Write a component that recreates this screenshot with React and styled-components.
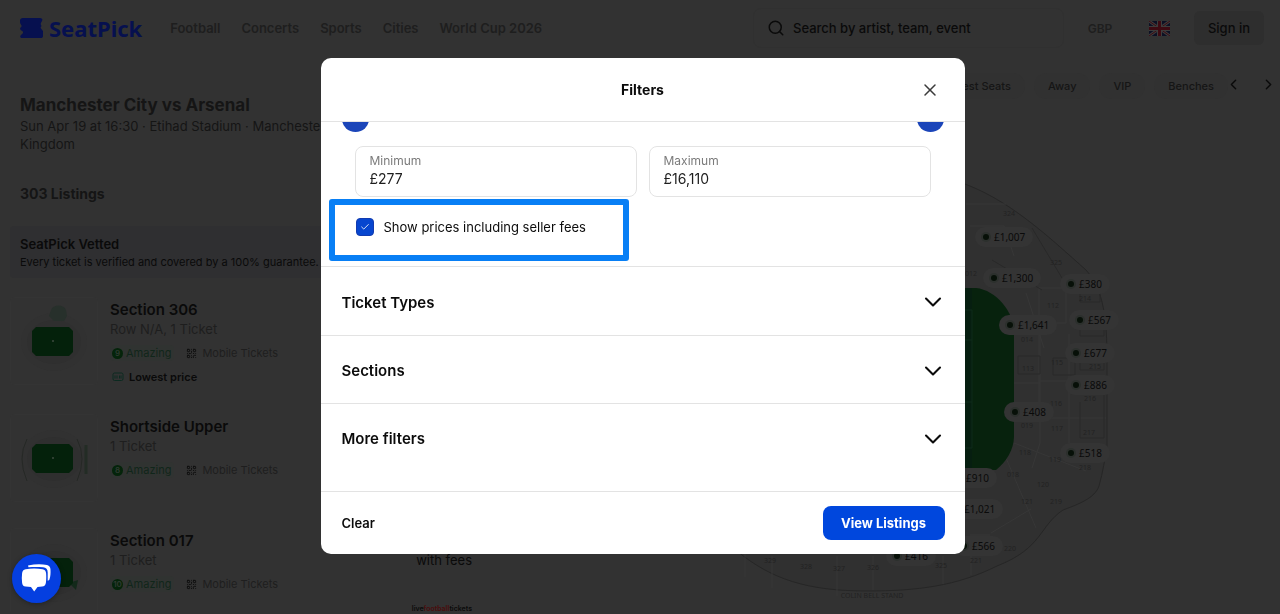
import React from 'react';
import styled, { createGlobalStyle, ThemeProvider } from 'styled-components';
import {
  Check,
  ChevronDown,
  ChevronLeft,
  ChevronRight,
  QrCode,
  Search,
  X,
} from 'lucide-react';

const theme = {
  colors: {
    page: '#323232',
    banner: '#2f2f31',
    raised: '#2e2e2e',
    line: '#2d2d2d',
    ink: '#0a0a0a',
    soft: '#151515',
    muted: '#1e1e1e',
    green: '#10261a',
    brand: '#06104f',
    primary: '#0047dd',
    highlight: '#087ff5',
    white: '#ffffff',
    text: '#0b0b0b',
    label: '#7b7b7b',
    border: '#e3e3e3',
  },
  fonts: {
    body: "Inter, 'Open Sans', sans-serif",
    logo: "'Noto Sans', 'Open Sans', sans-serif",
  },
};

const GlobalStyle = createGlobalStyle`
  *, *::before, *::after {
    box-sizing: border-box;
  }
  body {
    margin: 0;
    background: #323232;
    font-family: Inter, 'Open Sans', sans-serif;
    font-size: 13px;
  }
  h1, h2, h3, p, ul {
    margin: 0;
    padding: 0;
  }
  button, input {
    font: inherit;
    color: inherit;
    margin: 0;
  }
  button {
    border: 0;
    padding: 0;
    background: none;
    cursor: pointer;
  }
`;

const Page = styled.div`
  height: 100vh;
  overflow: hidden;
  display: flex;
  flex-direction: column;
  color: ${(props) => props.theme.colors.ink};
  background: ${(props) => props.theme.colors.page};
`;

const Header = styled.header`
  flex: none;
  height: 56px;
  display: flex;
  align-items: center;
  padding: 0 16px 0 20px;
`;

const Logo = styled.a`
  display: flex;
  align-items: center;
  gap: 6px;
  margin-right: 28px;
  color: ${(props) => props.theme.colors.brand};
  font-family: ${(props) => props.theme.fonts.logo};
  font-size: 22px;
  font-weight: 700;
  line-height: 24px;
  text-decoration: none;
`;

const Nav = styled.nav`
  display: flex;
  gap: 21px;
`;

const NavLink = styled.a`
  color: ${(props) => props.theme.colors.muted};
  font-weight: 600;
  line-height: 18px;
  text-decoration: none;
  white-space: nowrap;
`;

const SearchBox = styled.label`
  display: flex;
  align-items: center;
  gap: 8px;
  width: 311px;
  height: 40px;
  margin-left: auto;
  padding: 0 13px;
  border: 1px solid #303030;
  border-radius: 8px;
`;

const SearchInput = styled.input`
  flex: 1;
  min-width: 0;
  padding: 0;
  border: 0;
  outline: 0;
  background: none;
  font-weight: 500;

  &::placeholder {
    color: ${(props) => props.theme.colors.ink};
    opacity: 1;
  }
`;

const Currency = styled.button`
  width: 72px;
  color: ${(props) => props.theme.colors.muted};
  font-size: 12px;
  font-weight: 600;
`;

const Language = styled.button`
  display: flex;
  justify-content: center;
  width: 46px;
  margin-right: 12px;
`;

const SignIn = styled.button`
  width: 70px;
  height: 34px;
  border-radius: 6px;
  background: ${(props) => props.theme.colors.raised};
  font-weight: 500;
`;

const Main = styled.main`
  flex: 1;
  min-height: 0;
  display: grid;
  grid-template-columns: 486px minmax(0, 1fr);
`;

const Listings = styled.section`
  padding: 39px 8px 0 10px;
`;

const EventTitle = styled.h1`
  padding: 0 10px;
  color: ${(props) => props.theme.colors.soft};
  font-size: 17px;
  font-weight: 700;
  line-height: 20px;
`;

const EventMeta = styled.p`
  width: 400px;
  padding: 0 10px;
  margin-top: 2px;
  color: ${(props) => props.theme.colors.soft};
  line-height: 18px;
`;

const ListingCount = styled.h2`
  padding: 0 10px;
  margin-top: 31px;
  color: ${(props) => props.theme.colors.soft};
  font-size: 14px;
  font-weight: 700;
  line-height: 20px;
`;

const Banner = styled.div`
  margin: 22px 0 19px;
  padding: 9px 10px 6px;
  border-radius: 4px;
  background: ${(props) => props.theme.colors.banner};
`;

const BannerTitle = styled.h3`
  font-size: 13px;
  font-weight: 600;
  line-height: 18px;
`;

const BannerText = styled.p`
  font-size: 11px;
  line-height: 19px;
`;

const ListingList = styled.ul`
  display: grid;
  gap: 26px;
  list-style: none;
`;

const Listing = styled.li`
  display: flex;
  align-items: flex-start;
  gap: 12px;
`;

const Thumb = styled.svg`
  flex: none;
  width: 88px;
  height: 88px;
`;

const ListingBody = styled.div`
  flex: 1;
  padding: 2px 0;
`;

const ListingTitle = styled.h3`
  font-size: 15px;
  font-weight: 600;
  line-height: 22px;
`;

const ListingMeta = styled.p`
  color: ${(props) => props.theme.colors.muted};
  line-height: 17px;
`;

const TagRow = styled.div`
  display: flex;
  align-items: center;
  gap: 10px;
  height: 18px;
  margin-top: 6px;
`;

const Tag = styled.span`
  display: flex;
  align-items: center;
  gap: ${(props) => (props.$green ? '3px' : '5px')};
  padding: 0 3px 0 2px;
  border-radius: 4px;
  color: ${(props) =>
    props.$green ? props.theme.colors.green : props.theme.colors.muted};
  background: ${(props) => (props.$green ? '#303331' : 'none')};
  font-size: 11px;
  line-height: 16px;
`;

const Score = styled.span`
  display: grid;
  place-items: center;
  width: 11px;
  height: 11px;
  border-radius: 50%;
  color: #2f3a31;
  background: #04240a;
  font-size: 8px;
  font-weight: 600;
  line-height: 11px;
`;

const LowestPrice = styled(TagRow)`
  gap: 5px;
  padding-left: 2px;
  font-size: 11px;
  font-weight: 600;
`;

const PriceColumn = styled.div`
  display: flex;
  flex-direction: column;
  align-items: flex-end;
  gap: 34px;
  padding: 23px 6px 0 0;
  line-height: 18px;
`;

const Seller = styled.span`
  font-size: 7px;
  font-weight: 600;
  line-height: 12px;

  em {
    color: #4a0c0c;
    font-style: normal;
  }
`;

const MapPanel = styled.section`
  display: flex;
  flex-direction: column;
`;

const ChipBar = styled.div`
  flex: none;
  display: flex;
  align-items: center;
  justify-content: flex-end;
  gap: 9px;
  height: 60px;
  padding-right: 3px;
`;

const Chip = styled.button`
  height: 26px;
  padding: 0 14px;
  border-radius: 13px;
  color: ${(props) => props.theme.colors.soft};
  background: #313131;
  font-size: 11px;
  font-weight: 500;
  white-space: nowrap;
`;

const ChipArrows = styled.div`
  display: flex;
  justify-content: space-between;
  width: 52px;
  margin-left: -12px;
`;

const MapCanvas = styled.div`
  position: relative;
  flex: 1;
  min-height: 0;
  overflow: hidden;
`;

const Pin = styled.button`
  position: absolute;
  left: ${(props) => props.$x}px;
  top: ${(props) => props.$y}px;
  display: flex;
  align-items: center;
  gap: 5px;
  height: 20px;
  padding: 0 8px;
  border-radius: 10px;
  background: #343434;
  font-family: ${(props) => props.theme.fonts.logo};
  font-size: 10px;

  &::before {
    content: '';
    width: 6px;
    height: 6px;
    border-radius: 50%;
    background: #071008;
    box-shadow: 0 0 0 2px #2c302d;
  }
`;

const Backdrop = styled.div`
  position: fixed;
  inset: 0;
  display: flex;
  align-items: center;
  justify-content: center;
  padding: 0 0 2px 5px;
`;

const Dialog = styled.div`
  width: 644px;
  max-width: 100%;
  overflow: hidden;
  border-radius: 10px;
  color: ${(props) => props.theme.colors.text};
  background: ${(props) => props.theme.colors.white};
`;

const DialogHeader = styled.div`
  display: grid;
  grid-template-columns: 30px 1fr 30px;
  align-items: center;
  height: 64px;
  padding: 0 20px;
  border-bottom: 1px solid ${(props) => props.theme.colors.border};
`;

const DialogTitle = styled.h2`
  grid-column: 2;
  font-size: 14px;
  font-weight: 700;
  line-height: 20px;
  text-align: center;
`;

const CloseButton = styled.button`
  display: grid;
  place-items: center;
  height: 30px;
  color: #3b3b3b;
`;

const DialogBody = styled.div`
  height: 369px;
  overflow: hidden;
`;

const PriceFilter = styled.div`
  display: flow-root;
  height: 145px;
  padding: 0 21px;
  border-bottom: 1px solid ${(props) => props.theme.colors.border};
`;

/* scrolled partly out of view, under the dialog header */
const RangeRow = styled.div`
  display: flex;
  height: 26px;
  margin-top: -16px;
`;

const Range = styled.input`
  flex: 1;
  min-width: 0;
  height: 26px;
  appearance: none;
  background: none;

  &::-webkit-slider-thumb {
    appearance: none;
    width: 27px;
    height: 26px;
    border-radius: 50%;
    background: #1b45b9;
  }
`;

const Fields = styled.div`
  display: grid;
  grid-template-columns: 1fr 1fr;
  gap: 12px;
  padding: 0 13px;
  margin-top: 14px;
`;

const Field = styled.label`
  display: flex;
  flex-direction: column;
  height: 51px;
  padding: 6px 14px;
  border: 1px solid ${(props) => props.theme.colors.border};
  border-radius: 8px;
  color: ${(props) => props.theme.colors.label};
  font-size: 12px;
  line-height: 16px;
`;

const FieldInput = styled.input`
  width: 100%;
  height: 18px;
  padding: 0;
  border: 0;
  outline: 0;
  color: #1d1d1d;
  background: none;
  font-size: 14px;
`;

const FeesOption = styled.label`
  position: relative;
  display: flex;
  align-items: center;
  gap: 10px;
  width: fit-content;
  height: 18px;
  margin: 21px 14px 0;
`;

const HighlightFrame = styled.span`
  position: absolute;
  left: -27px;
  top: -19px;
  width: 300px;
  height: 62px;
  border: 6px solid ${(props) => props.theme.colors.highlight};
  border-radius: 3px;
  pointer-events: none;
`;

const CheckWrap = styled.span`
  display: grid;
  place-items: center;
  width: 18px;
  height: 18px;
  color: ${(props) => props.theme.colors.white};

  > * {
    grid-area: 1 / 1;
  }
  svg {
    z-index: 1;
  }
`;

const CheckInput = styled.input`
  appearance: none;
  width: 18px;
  height: 18px;
  border: 1px solid #123bb0;
  border-radius: 4px;
  background: #0746cf;
`;

const AccordionRow = styled.button`
  display: flex;
  align-items: center;
  justify-content: space-between;
  width: 100%;
  height: 68px;
  padding: 2px 18px 0 21px;
  color: ${(props) => props.theme.colors.text};
  font-size: 15px;
  font-weight: 600;

  & + & {
    border-top: 1px solid ${(props) => props.theme.colors.border};
  }
`;

const DialogFooter = styled.div`
  display: flex;
  align-items: center;
  justify-content: space-between;
  height: 63px;
  padding: 0 20px 0 21px;
  border-top: 1px solid ${(props) => props.theme.colors.border};
`;

const ClearButton = styled.button`
  font-weight: 600;
  line-height: 34px;
`;

const ViewButton = styled.button`
  width: 122px;
  height: 34px;
  border-radius: 8px;
  color: ${(props) => props.theme.colors.white};
  background: ${(props) => props.theme.colors.primary};
  font-weight: 700;
`;

const ChatButton = styled.button`
  position: fixed;
  left: 12px;
  bottom: 11px;
  display: grid;
  place-items: center;
  width: 49px;
  height: 49px;
  border-radius: 50%;
  background: #053fe0;
  box-shadow: 0 1px 5px rgba(0, 0, 0, 0.3);
`;

const navLinks = ['Football', 'Concerts', 'Sports', 'Cities', 'World Cup 2026'];
const chips = ['Best Seats', 'Away', 'VIP', 'Benches'];
const accordions = ['Ticket Types', 'Sections', 'More filters'];

const listings = [
  { title: 'Section 306', meta: 'Row N/A, 1 Ticket', score: 9, lowest: true, view: 'top' },
  { title: 'Shortside Upper', meta: '1 Ticket', score: 8, view: 'sides' },
  { title: 'Section 017', meta: '1 Ticket', score: 10, view: 'corner', seller: true },
];

const pins = [
  { price: '£1,007', x: 489, y: 111 },
  { price: '£1,300', x: 497, y: 152 },
  { price: '£380', x: 574, y: 158 },
  { price: '£567', x: 583, y: 194 },
  { price: '£1,641', x: 513, y: 199 },
  { price: '£677', x: 579, y: 227 },
  { price: '£886', x: 579, y: 259 },
  { price: '£408', x: 518, y: 286 },
  { price: '£518', x: 574, y: 327 },
  { price: '£910', x: 461, y: 352 },
  { price: '£1,021', x: 459, y: 383 },
  { price: '£566', x: 467, y: 420 },
  { price: '£416', x: 400, y: 430 },
];

const blockLabels = [
  ['324', 523, 108], ['325', 570, 157], ['112', 567, 200], ['214', 599, 193],
  ['014', 541, 234], ['113', 542, 263], ['115', 571, 257], ['215', 609, 261],
  ['116', 570, 298], ['216', 604, 293], ['117', 571, 323], ['019', 541, 320],
  ['217', 603, 327], ['118', 539, 347], ['119', 569, 354], ['218', 599, 362],
  ['018', 527, 369], ['120', 557, 379], ['121', 541, 396], ['219', 570, 396],
  ['220', 524, 443], ['221', 490, 455], ['329', 284, 455], ['328', 320, 461],
  ['327', 353, 463], ['326', 387, 462], ['325', 455, 460], ['012', 485, 168],
];

const LogoMark = () => (
  <svg width="23" height="21" viewBox="0 0 23 21" aria-hidden="true">
    <path
      fill="currentColor"
      d="M3 0h17c1.600 0 2.600 1 2.300 2.300-.2 1-.8 1.600-1.300 2.500-.5 1.200-.1 2.400.7 3.200-.8.500-1.300 1.300-.9 2.200.6 1.200 2 1.700 2.200 3V18c0 1.500-.9 2-2.300 2H2.300C.9 20 0 19.300.3 18c.2-1.200 2.800-2 2.800-3.500 0-1.800-2.600-1.800-3-3.400-.3-1.300 1.700-2 1.500-3.200C1.400 6.600 0 6 0 4.300V2.500C0 1 1.200 0 3 0z"
    />
  </svg>
);

const Flag = () => (
  <svg width="21" height="15" viewBox="0 0 21 15" aria-hidden="true">
    <rect width="21" height="15" rx="1" fill="#0c1024" />
    <path d="M0 0l21 15M21 0L0 15" stroke="#3c3c3c" strokeWidth="3" />
    <path d="M0 0l21 15M21 0L0 15" stroke="#3d0a12" strokeWidth="1" />
    <path d="M10.500 0v15M0 7.500h21" stroke="#3c3c3c" strokeWidth="5" />
    <path d="M10.500 0v15M0 7.500h21" stroke="#3d0a12" strokeWidth="3" />
  </svg>
);

const PriceIcon = () => (
  <svg width="12" height="10" viewBox="0 0 12 10" fill="none" stroke="#0b2a20" aria-hidden="true">
    <rect x="1" y="1" width="10" height="7.500" rx="1.500" />
    <path d="M3 3.500v3M5 3.500v3M7.500 3.500v3M9 3.500v3" />
  </svg>
);

const SeatView = ({ view }) => (
  <Thumb viewBox="0 0 88 88" aria-hidden="true">
    <rect x=".5" y=".5" width="87" height="87" rx="4" fill="#323232" stroke="#343434" />
    <ellipse cx="44" cy="45" rx="33" ry="29" fill="#313131" />
    <ellipse cx="44" cy="45" rx="27" ry="22" fill="#2f2f2f" />
    {view === 'top' && (
      <path d="M41 13c2-6 13-6 15 0l1 6-3 5H44l-5-5z" fill="#27302b" />
    )}
    {view === 'sides' && (
      <g fill="none" stroke="#252825">
        <path d="M17 25q-10 19 0 42M67 25q10 19 0 42" />
        <path d="M76 31v29" stroke="#232c25" strokeWidth="3" />
      </g>
    )}
    {view === 'corner' && <path d="M59 55l9-3-2 10z" fill="#13291a" />}
    <path d="M26 30h33l4 4v21l-4 4H26l-4-4V34z" fill="#04210b" />
    <circle cx="43" cy="44" r="1" fill="#3c4a3f" />
  </Thumb>
);

const StadiumMap = () => (
  <svg width="794" height="506" viewBox="0 8 794 506" aria-hidden="true">
    <path
      d="M380 60c46 0 74 6 104 18 44 18 80 52 116 84 18 20 21 50 21 90v86c-2 12-4 26-8 40-4 12-20 18-36 24-24 16-20 38-66 56-40 20-80 25-130 25-60 0-96-12-130-40V120z"
      fill="#303030"
      stroke="#262626"
      strokeWidth="1"
    />
    <g fill="none" stroke="#373737" strokeWidth="1">
      <path d="M528 226h25v70h-25M528 275h26M554 225v110l-8 25M554 310h66M554 273h66M583 226v110M528 335l72 28M520 350l30 70M553 180h27v35h-27zM540 185l18 55M484 118h34l10 30M480 96h40" />
      <path d="M259 445v24M286 448v32M351 448v40M387 448v34M457 448v28M485 445v22M505 425l40-24M484 427h20" />
    </g>
    <g fill="none" stroke="#292929" strokeWidth="1">
      <path d="M567 250h22v17h-22zM532 248h22v18h-22zM594 294v36h24v-52M594 214h24v14h-24zM594 250h24v12h-24zM506 152l50 30M546 120l30 50M594 181h20v13h-20z" />
    </g>
    <path
      d="M400 180h90c20 2 38 24 38 44v104c0 14-8 26-18 34h-110z"
      fill="#07220d"
    />
    <path d="M400 180h86v182h-86z" fill="#071d12" opacity=".6" />
    <path d="M400 202h86v138h-86M400 232h86M400 294h86" fill="none" stroke="#0e2a1a" />
    <g fill="#222222" fontFamily="Noto Sans, sans-serif" fontSize="7" textAnchor="middle">
      {blockLabels.map(([label, x, y]) => (
        <text key={`${label}-${x}`} x={x} y={y}>{label}</text>
      ))}
      <text x="386" y="490">COLIN BELL STAND</text>
    </g>
  </svg>
);

const ChatIcon = () => (
  <svg width="31" height="31" viewBox="0 0 31 31" aria-hidden="true">
    <path
      fill="#fff"
      d="M7 2.500q11-2.500 19-.4c2.600.7 3.400 2.200 3.500 4.500.2 3.700 0 6.800-1 9.600-.4 1-1 1.300-1.800 1.600V9.500c0-3.300-1.500-5-4.600-5.200C17.500 4 12 4 7.500 4.300z"
    />
    <path
      fill="#fff"
      d="M4.600 6.200c5-.8 12-.8 17 0 2.200.4 3.300 1.700 3.500 4 .3 3.500.2 6.500-.2 9.500-.3 2.400-1.500 3.600-3.800 3.900-1.700.2-3 .4-4.600.5L13.200 28.500 10 24.100c-1.700-.1-3.600-.2-5.400-.5-2.200-.4-3.300-1.600-3.500-3.900-.4-3.300-.4-6.300 0-9.500.3-2.300 1.300-3.600 3.500-4z"
    />
  </svg>
);

const ListingCard = ({ item }) => (
  <Listing>
    <SeatView view={item.view} />
    <ListingBody>
      <ListingTitle>{item.title}</ListingTitle>
      <ListingMeta>{item.meta}</ListingMeta>
      <TagRow>
        <Tag $green>
          <Score>{item.score}</Score>
          Amazing
        </Tag>
        <Tag>
          <QrCode size={11} color="#0d0d0d" />
          Mobile Tickets
        </Tag>
      </TagRow>
      {item.lowest && (
        <LowestPrice>
          <PriceIcon />
          Lowest price
        </LowestPrice>
      )}
    </ListingBody>
    {item.seller && (
      <PriceColumn>
        <span>with fees</span>
        <Seller>
          live<em>football</em>tickets
        </Seller>
      </PriceColumn>
    )}
  </Listing>
);

const FiltersDialog = () => (
  <Backdrop>
    <Dialog role="dialog" aria-modal="true" aria-labelledby="filters-title">
      <DialogHeader>
        <DialogTitle id="filters-title">Filters</DialogTitle>
        <CloseButton aria-label="Close">
          <X size={20} strokeWidth={1.8} />
        </CloseButton>
      </DialogHeader>
      <DialogBody>
        <PriceFilter>
          <RangeRow>
            <Range type="range" min="0" max="100" defaultValue="0" aria-label="Minimum price" />
            <Range type="range" min="0" max="100" defaultValue="100" aria-label="Maximum price" />
          </RangeRow>
          <Fields>
            <Field>
              Minimum
              <FieldInput type="text" defaultValue="£277" />
            </Field>
            <Field>
              Maximum
              <FieldInput type="text" defaultValue="£16,110" />
            </Field>
          </Fields>
          <FeesOption>
            <CheckWrap>
              <CheckInput type="checkbox" defaultChecked />
              <Check size={10} strokeWidth={2} />
            </CheckWrap>
            Show prices including seller fees
            <HighlightFrame />
          </FeesOption>
        </PriceFilter>
        {accordions.map((title) => (
          <AccordionRow key={title} aria-expanded="false">
            {title}
            <ChevronDown size={28} strokeWidth={1.8} />
          </AccordionRow>
        ))}
      </DialogBody>
      <DialogFooter>
        <ClearButton>Clear</ClearButton>
        <ViewButton>View Listings</ViewButton>
      </DialogFooter>
    </Dialog>
  </Backdrop>
);

const App = () => {
  return (
    <ThemeProvider theme={theme}>
      <GlobalStyle />
      <Page>
        <Header>
          <Logo href="#">
            <LogoMark />
            SeatPick
          </Logo>
          <Nav>
            {navLinks.map((link) => (
              <NavLink key={link} href="#">{link}</NavLink>
            ))}
          </Nav>
          <SearchBox>
            <Search size={18} strokeWidth={2} />
            <SearchInput
              type="search"
              aria-label="Search"
              placeholder="Search by artist, team, event"
            />
          </SearchBox>
          <Currency>GBP</Currency>
          <Language aria-label="Language">
            <Flag />
          </Language>
          <SignIn>Sign in</SignIn>
        </Header>
        <Main>
          <Listings>
            <EventTitle>Manchester City vs Arsenal</EventTitle>
            <EventMeta>
              Sun Apr 19 at 16:30 · Etihad Stadium · Manchester, United Kingdom
            </EventMeta>
            <ListingCount>303 Listings</ListingCount>
            <Banner>
              <BannerTitle>SeatPick Vetted</BannerTitle>
              <BannerText>
                Every ticket is verified and covered by a 100% guarantee.
              </BannerText>
            </Banner>
            <ListingList>
              {listings.map((item) => (
                <ListingCard key={item.title} item={item} />
              ))}
            </ListingList>
          </Listings>
          <MapPanel>
            <ChipBar>
              {chips.map((chip) => (
                <Chip key={chip}>{chip}</Chip>
              ))}
              <ChipArrows>
                <button aria-label="Previous"><ChevronLeft size={17} /></button>
                <button aria-label="Next"><ChevronRight size={17} /></button>
              </ChipArrows>
            </ChipBar>
            <MapCanvas>
              <StadiumMap />
              {pins.map((pin) => (
                <Pin key={pin.price} $x={pin.x} $y={pin.y}>{pin.price}</Pin>
              ))}
            </MapCanvas>
          </MapPanel>
        </Main>
      </Page>
      <FiltersDialog />
      <ChatButton aria-label="Open chat">
        <ChatIcon />
      </ChatButton>
    </ThemeProvider>
  );
};

export default App;
